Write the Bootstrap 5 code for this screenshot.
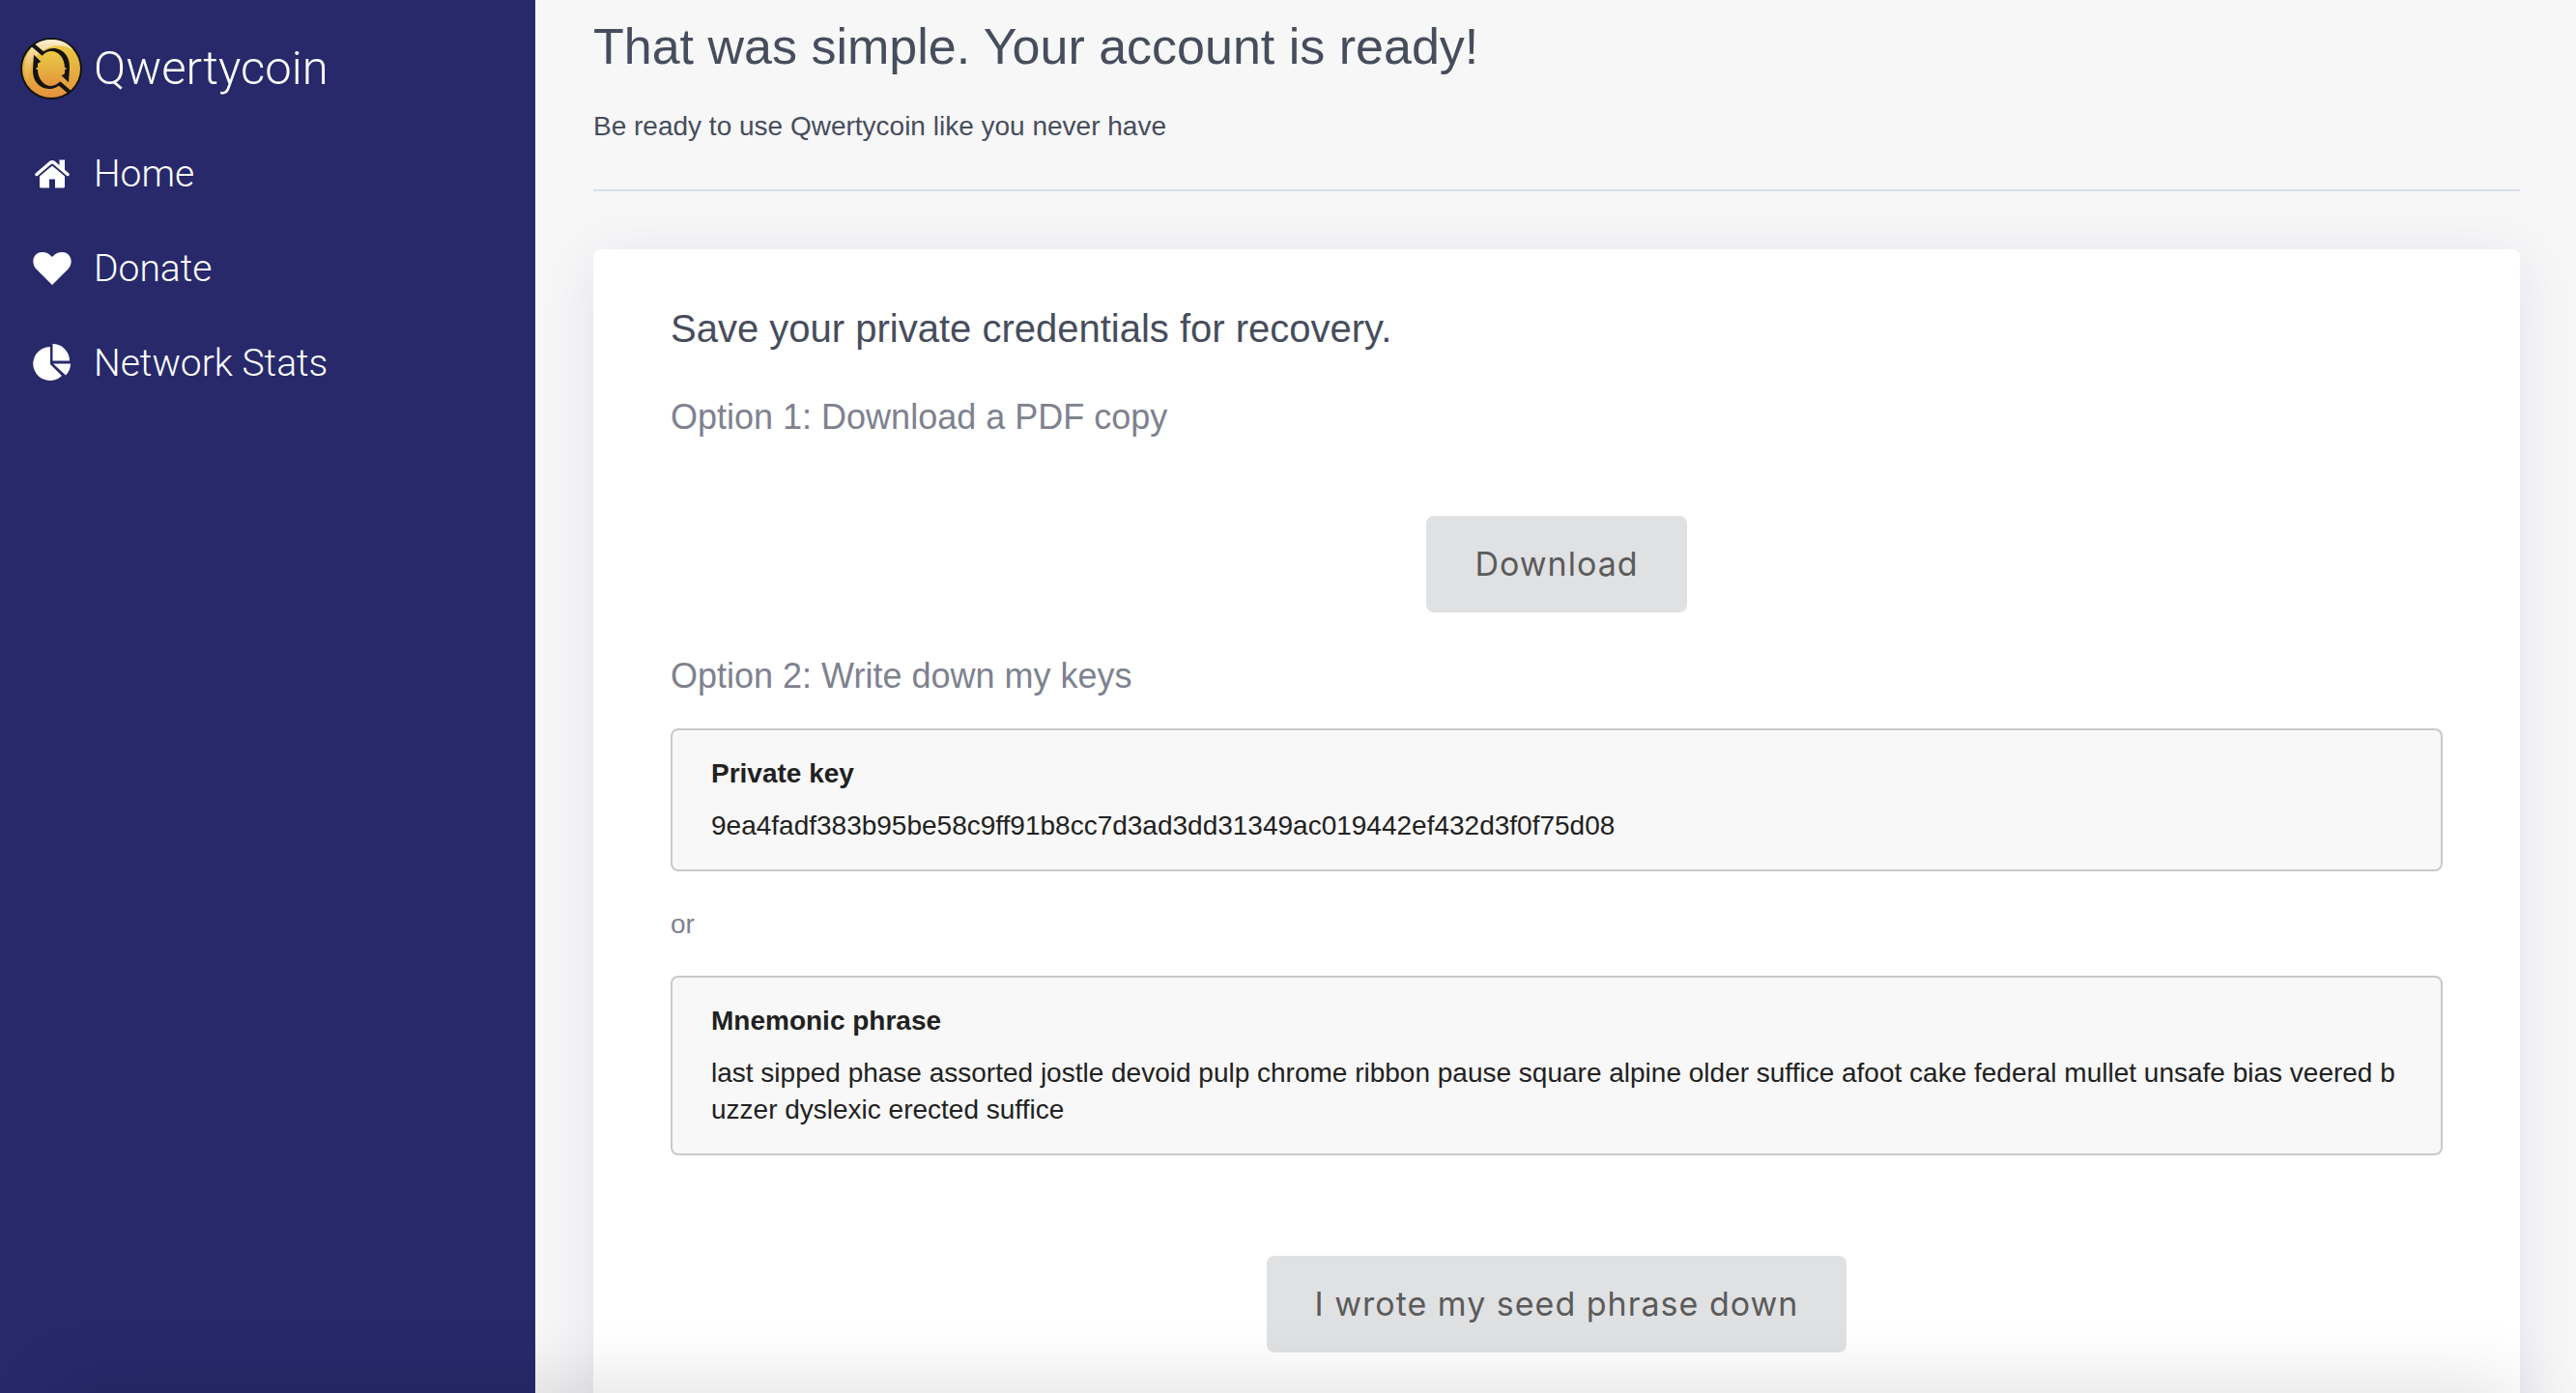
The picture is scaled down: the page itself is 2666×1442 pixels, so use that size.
<!DOCTYPE html>
<html lang="en">
<head>
<meta charset="utf-8">
<meta name="viewport" content="width=device-width, initial-scale=1">
<title>Qwertycoin</title>
<link href="https://cdn.jsdelivr.net/npm/bootstrap@5.3.0/dist/css/bootstrap.min.css" rel="stylesheet">
<style>
body{font-family:"Liberation Sans",Arial,sans-serif;font-size:28px;line-height:38px;color:#464d5c;background:#f7f7f7}
.side-panel{width:554px;background:#27296b;padding:39px 21px 0;font-family:Roboto,sans-serif;font-weight:300}
.side-panel a{color:#fff;gap:10px}
.brand-link{font-size:49px;line-height:64px;margin-bottom:28px}
.side-item{font-size:39px;line-height:98px}
.icon-cell{width:66px}
.page-main{padding:16px 58px 0 60px}
.page-title{font-size:52px;line-height:64px;margin-bottom:32px;font-weight:400}
.page-rule{border-top:2px solid #d9deea;opacity:1;margin:46px 0 60px}
.key-card{border-radius:8px;padding:58px 80px 80px;box-shadow:0 10px 60px rgba(80,95,180,.13)}
.card-head{font-size:40px;line-height:48px;margin-bottom:46px;font-weight:400}
.option-head{font-size:36px;line-height:44px;font-weight:400;color:#7e828f;margin-bottom:32px}
.soft-text{color:#7e828f;margin:36px 0 34px}
.download-area{padding:48px 0 44px}
.confirm-area{padding-top:104px}
.act-btn{font-family:Inter,sans-serif;font-size:34px;line-height:44px;letter-spacing:1px;padding:28px 50px;border:0;border-radius:8px;background:#e0e1e3;color:#5b5b5b}
.act-btn:hover{background:#d6d7d9;color:#4b4b4b}
.key-box{border:2px solid #c9c9c9;border-radius:8px;background:#f8f8f8;color:#212121;padding:26px 40px}
.key-box h3{font-size:28px;line-height:38px;font-weight:700;margin-bottom:16px}
.key-box p{word-break:break-all}
.bottom-shade{height:60px;bottom:-60px;left:60px;right:60px;box-shadow:0 0 80px rgba(0,0,0,.16);pointer-events:none}
</style>
</head>
<body>
<div class="d-flex vh-100 overflow-hidden">
  <nav class="side-panel flex-shrink-0" aria-label="Main">
    <a href="#" class="brand-link d-flex align-items-center text-decoration-none">
      <span class="icon-cell d-flex"><svg width="64" height="64" viewBox="0 0 192 192" aria-hidden="true">
        <defs>
          <linearGradient id="gold" x1="0" y1="0" x2="0" y2="1"><stop offset="0" stop-color="#eccb45"/><stop offset=".45" stop-color="#e6b441"/><stop offset="1" stop-color="#e5923c"/></linearGradient>
          <linearGradient id="shine" x1="0" y1="0" x2="0" y2="1"><stop offset="0" stop-color="#fbf1d8"/><stop offset="1" stop-color="#e9b24a" stop-opacity=".3"/></linearGradient>
          <path id="half" d="M44 19 72 43C96 26 126 31 142 53C153 69 153 86 153 94L150 139 128 118 138 112 138 99 143 98 143 94 138 93C138 64 118 42 97 42C84 42 76 48 68 56L34 27Z"/>
        </defs>
        <circle cx="96" cy="96" r="96" fill="#15130f"/>
        <circle cx="96" cy="96" r="90" fill="url(#gold)"/>
        <path d="M27 143C-3 92 18 6 96 6C130 6 152 20 165 38C130 18 96 22 70 40C34 66 24 103 27 143Z" fill="url(#shine)"/>
        <ellipse cx="96" cy="96" rx="44" ry="56" fill="url(#gold)"/>
        <use href="#half" fill="#15130f"/>
        <use href="#half" fill="#15130f" transform="rotate(180 96 96)"/>
      </svg></span>
      <span>Qwertycoin</span>
    </a>
    <a href="#" class="side-item d-flex align-items-center text-decoration-none">
      <span class="icon-cell d-flex justify-content-center"><svg width="36" height="30" viewBox="0 0 36 30" fill="#fff" aria-hidden="true"><path d="M18 6 31 17V28Q31 29.500 29.500 29.500H21V20.500H15V29.500H6.500Q5 29.500 5 28V17Z"/><path d="M2 15.500 16 3.500Q18 2 20 3.500L34 15.500" fill="none" stroke="#fff" stroke-width="3.500" stroke-linecap="round"/><path d="M25.500 .5H31V12L25.500 7.500Z"/><path d="M4.500 17.200 18 5.800 31.500 17.200" fill="none" stroke="#27296b" stroke-width="1.100"/></svg></span>
      <span>Home</span>
    </a>
    <a href="#" class="side-item d-flex align-items-center text-decoration-none">
      <span class="icon-cell d-flex justify-content-center"><svg width="40" height="36" viewBox="0 0 40 36" fill="#fff" aria-hidden="true"><path d="M20 35 3 18C-2 12 0 1 10 1C15 1 18 4 20 6C22 4 25 1 30 1C40 1 42 12 37 18Z"/></svg></span>
      <span>Donate</span>
    </a>
    <a href="#" class="side-item d-flex align-items-center text-decoration-none">
      <span class="icon-cell d-flex justify-content-center"><svg width="40" height="42" viewBox="0 0 40 42" fill="#fff" aria-hidden="true"><path d="M18 4V22L30 34A17.500 17.500 0 1 1 18 4Z"/><path d="M20.500 1A17.500 17.500 0 0 1 38 18.500H20.500Z"/><path d="M21 21.500H39A17.500 17.500 0 0 1 34 33.500Z"/></svg></span>
      <span>Network Stats</span>
    </a>
  </nav>
  <main class="page-main flex-grow-1">
    <h1 class="page-title">That was simple. Your account is ready!</h1>
    <p class="mb-0">Be ready to use Qwertycoin like you never have</p>
    <hr class="page-rule">
    <section class="key-card bg-white">
      <h2 class="card-head">Save your private credentials for recovery.</h2>
      <h3 class="option-head">Option 1: Download a PDF copy</h3>
      <div class="download-area"><button type="button" class="btn act-btn d-block mx-auto">Download</button></div>
      <h3 class="option-head">Option 2: Write down my keys</h3>
      <div class="key-box"><h3>Private key</h3><p class="mb-0">9ea4fadf383b95be58c9ff91b8cc7d3ad3dd31349ac019442ef432d3f0f75d08</p></div>
      <p class="soft-text">or</p>
      <div class="key-box"><h3>Mnemonic phrase</h3><p class="mb-0">last sipped phase assorted jostle devoid pulp chrome ribbon pause square alpine older suffice afoot cake federal mullet unsafe bias veered buzzer dyslexic erected suffice</p></div>
      <div class="confirm-area"><button type="button" class="btn act-btn d-block mx-auto">I wrote my seed phrase down</button></div>
    </section>
  </main>
</div>
<div class="bottom-shade position-fixed"></div>
<script src="https://cdn.jsdelivr.net/npm/bootstrap@5.3.0/dist/js/bootstrap.bundle.min.js"></script>
</body>
</html>
